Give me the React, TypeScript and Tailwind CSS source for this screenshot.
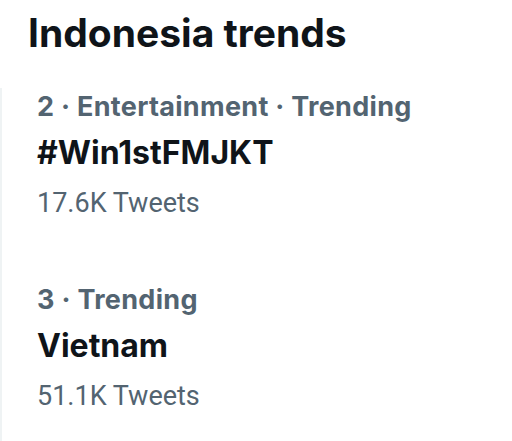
const TRENDS = [
  { meta: '2 · Entertainment · Trending', name: '#Win1stFMJKT', count: '17.6K Tweets' },
  { meta: '3 · Trending', name: 'Vietnam', count: '51.1K Tweets' },
]

export default function App() {
  return (
    <div className="w-[512px] h-[441px] overflow-hidden bg-white font-['Inter',sans-serif]">
      <h2 className="pt-[9px] pl-[28px] text-[39px] leading-[48px] font-bold text-[#0f1419]">Indonesia trends</h2>

      <div className="mt-[31px] border-l-2 border-[#eff3f4]">
        {TRENDS.map(t => (
          <div key={t.name} className="pl-[35px] pt-[3px] h-[193px]">
            <div className="text-[27px] leading-[32px] tracking-[0.3px] font-bold text-[#536471]">{t.meta}</div>
            <div className="mt-[12px] text-[32px] leading-[36px] font-bold text-[#0f1419]">{t.name}</div>
            <div className="mt-[15px] font-['Roboto',sans-serif] text-[27px] leading-[34px] text-[#536471]">{t.count}</div>
          </div>
        ))}
      </div>
    </div>
  )
}
